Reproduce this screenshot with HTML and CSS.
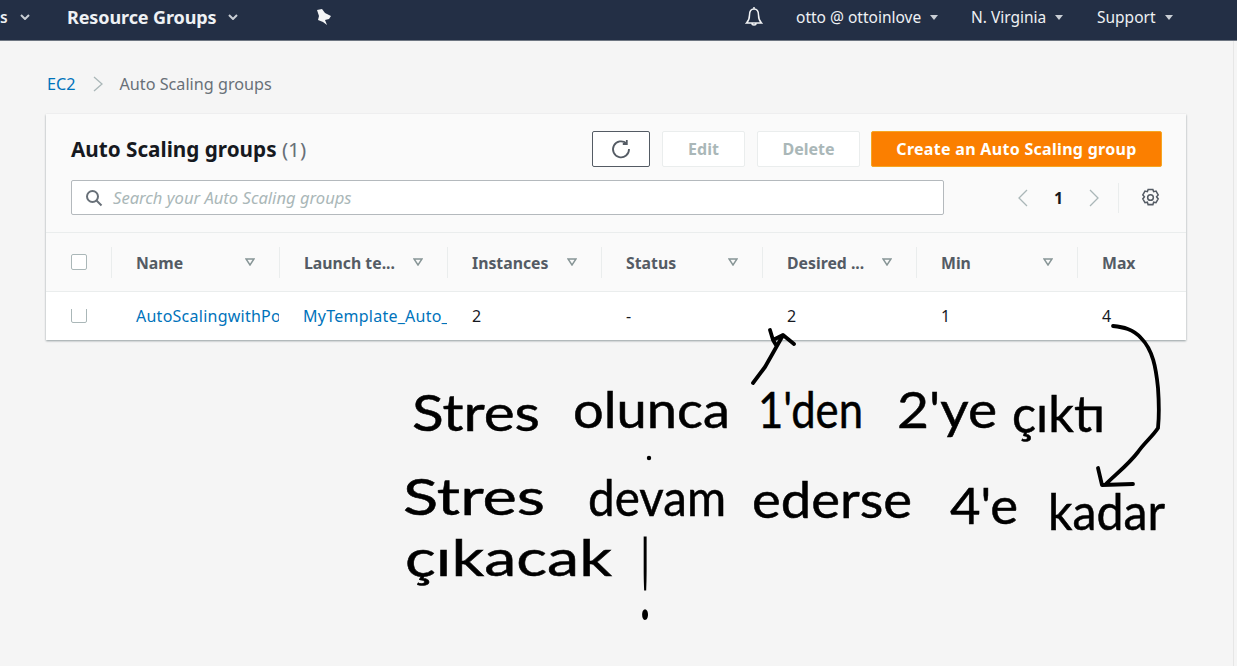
FILE: index.html
```html
<!DOCTYPE html>
<html lang="tr">
<head>
<meta charset="utf-8">
<title>Auto Scaling groups</title>
<link rel="stylesheet" href="styles.css">
</head>
<body>
<header class="topbar">
  <nav class="nav-left">
    <span class="nav-item nav-cut">s <svg class="chev" viewBox="0 0 10 6"><path d="M1 1l4 4 4-4"/></svg></span>
    <span class="nav-item nav-strong">Resource Groups <svg class="chev" viewBox="0 0 10 6"><path d="M1 1l4 4 4-4"/></svg></span>
    <svg class="pin" viewBox="0 0 16 20"><path d="M1 3l5-1 3 4 6 3-2 3-4 1 2 5-4-3-5-2 1-4z"/></svg>
  </nav>
  <nav class="nav-right">
    <svg class="bell" viewBox="0 0 18 22"><path d="M9 1v2M4.500 9c0-4 2-6 4.500-6s4.500 2 4.500 6c0 4 1 6 3 8H1.500c2-2 3-4 3-8zM7 17.500c0 2 4 2 4 0"/></svg>
    <span class="nav-item nav-user">otto @ ottoinlove <svg class="tri" viewBox="0 0 8 5"><path d="M0 0h8L4 5z"/></svg></span>
    <span class="nav-item nav-region">N. Virginia <svg class="tri" viewBox="0 0 8 5"><path d="M0 0h8L4 5z"/></svg></span>
    <span class="nav-item nav-support">Support <svg class="tri" viewBox="0 0 8 5"><path d="M0 0h8L4 5z"/></svg></span>
  </nav>
</header>

<main class="content">
  <div class="crumbs">
    <a class="link">EC2</a>
    <svg class="crumb-sep" viewBox="0 0 10 16"><path d="M1 1l8 7-8 7"/></svg>
    <span>Auto Scaling groups</span>
  </div>

  <section class="card">
    <div class="card-head">
      <div class="title-row">
        <h1>Auto Scaling groups <span class="count">(1)</span></h1>
        <div class="actions">
          <button class="btn btn-icon"><svg viewBox="0 0 20 20"><path d="M15.500 4.500A8 8 0 1 0 18 10M15.800 1v4h-4"/></svg></button>
          <button class="btn btn-off btn-edit">Edit</button>
          <button class="btn btn-off btn-del">Delete</button>
          <button class="btn btn-primary">Create an Auto Scaling group</button>
        </div>
      </div>
      <div class="search-row">
        <div class="search">
          <svg viewBox="0 0 18 18"><circle cx="7.500" cy="7.500" r="5.500"/><path d="M11.500 11.500l5 5"/></svg>
          <span>Search your Auto Scaling groups</span>
        </div>
        <div class="pager">
          <svg class="pg" viewBox="0 0 10 18"><path d="M9 1L1 9l8 8"/></svg>
          <b>1</b>
          <svg class="pg" viewBox="0 0 10 18"><path d="M1 1l8 8-8 8"/></svg>
          <i class="pager-sep"></i>
          <svg class="gear" viewBox="0 0 20 20"><path d="M7.500 1.500h5l.8 2.400 2.500-.6 2.300 4-1.700 2 1.700 2.200-2.300 4-2.500-.6-.8 2.600h-5l-.8-2.600-2.500.6-2.300-4 1.700-2.200-1.700-2 2.300-4 2.500.6z"/><circle cx="10" cy="10" r="3"/></svg>
        </div>
      </div>
    </div>

    <div class="grid grid-head">
      <div class="cell cell-check"><i class="check"></i></div>
      <div class="cell th"><span>Name</span><svg class="sort" viewBox="0 0 10 8"><path d="M1 1h8L5 7z"/></svg></div>
      <div class="cell th"><span>Launch te...</span><svg class="sort" viewBox="0 0 10 8"><path d="M1 1h8L5 7z"/></svg></div>
      <div class="cell th"><span>Instances</span><svg class="sort" viewBox="0 0 10 8"><path d="M1 1h8L5 7z"/></svg></div>
      <div class="cell th"><span>Status</span><svg class="sort" viewBox="0 0 10 8"><path d="M1 1h8L5 7z"/></svg></div>
      <div class="cell th"><span>Desired ...</span><svg class="sort" viewBox="0 0 10 8"><path d="M1 1h8L5 7z"/></svg></div>
      <div class="cell th"><span>Min</span><svg class="sort" viewBox="0 0 10 8"><path d="M1 1h8L5 7z"/></svg></div>
      <div class="cell th"><span>Max</span></div>
    </div>

    <div class="grid grid-row">
      <div class="cell cell-check"><i class="check"></i></div>
      <div class="cell td"><a class="link">AutoScalingwithPolicy</a></div>
      <div class="cell td td-tight"><a class="link">MyTemplate_Auto_Scaling</a></div>
      <div class="cell td">2</div>
      <div class="cell td">-</div>
      <div class="cell td">2</div>
      <div class="cell td">1</div>
      <div class="cell td">4</div>
    </div>
  </section>
</main>

<svg class="ink" viewBox="0 0 1237 666" aria-label="Notlar">
  <g class="ink-lines">
    <path d="M753 383l12-16 17-30M770 330l3 10 3 5M773 340l10-5 11 9"/>
    <path d="M1113 326c10 1 20 3 28 12 12 12 15 30 17 50 1 14 1 30 0 40-5 8-14 15-20 24-10 13-22 22-33 33M1098 468l4 17 31-1"/>
  </g>
  <circle class="ink-dot" cx="649" cy="458" r="2.200"/>
  <g class="ink-text">
    <text x="412" y="431" textLength="128" lengthAdjust="spacingAndGlyphs">Stres</text>
    <text x="573" y="428" textLength="157" lengthAdjust="spacingAndGlyphs">olunca</text>
    <text x="758" y="428" textLength="105" lengthAdjust="spacingAndGlyphs">1'den</text>
    <text x="897" y="428" textLength="100" lengthAdjust="spacingAndGlyphs">2'ye</text>
    <text x="1012" y="432" textLength="93" lengthAdjust="spacingAndGlyphs">çıktı</text>
    <text x="403" y="515" textLength="142" lengthAdjust="spacingAndGlyphs">Stres</text>
    <text x="588" y="516" textLength="138" lengthAdjust="spacingAndGlyphs">devam</text>
    <text x="752" y="518" textLength="160" lengthAdjust="spacingAndGlyphs">ederse</text>
    <text x="950" y="524" textLength="68" lengthAdjust="spacingAndGlyphs">4'e</text>
    <text x="1048" y="530" textLength="117" lengthAdjust="spacingAndGlyphs">kadar</text>
    <text x="405" y="576" textLength="207" lengthAdjust="spacingAndGlyphs">çıkacak</text>
    <text class="ink-bang" transform="translate(645 619) scale(.55 1)">!</text>
  </g>
</svg>
</body>
</html>
```
FILE: styles.css
```css
* { box-sizing: border-box; }
html, body { margin: 0; height: 100%; }
body {
  position: relative;
  width: 1237px;
  height: 666px;
  overflow: hidden;
  background: #f5f5f5;
  font-family: "Noto Sans", "Open Sans", sans-serif;
  color: #16191f;
}

/* top bar */
.topbar {
  height: 41px;
  background: #232f45;
  border-bottom: 1px solid #6e7682;
  display: flex;
  justify-content: space-between;
  align-items: center;
  color: #eef1f4;
  font-size: 15.500px;
  padding-bottom: 6px;
}
.nav-left, .nav-right { display: flex; align-items: center; }
.nav-item { display: flex; align-items: center; white-space: nowrap; }
.nav-cut { font-weight: 600; gap: 12px; width: 67px; }
.nav-strong { font-weight: 700; font-size: 18px; gap: 11px; width: 249px; letter-spacing: -.1px; }
.chev { width: 10px; height: 6px; fill: none; stroke: #c9ced5; stroke-width: 2; }
.tri { width: 10px; height: 5px; fill: #c9ced5; }
.pin { width: 16px; height: 20px; fill: #f4f5f6; }
.bell { width: 18px; height: 22px; fill: none; stroke: #f0f2f4; stroke-width: 1.500; margin-right: 33px; }
.nav-user { gap: 8px; width: 175px; }
.nav-region { gap: 8px; width: 126px; }
.nav-support { gap: 8px; width: 140px; }

/* content */
.content { width: 1234px; height: 625px; padding-left: 46px; border-right: 1px solid #e6e6e6; }
.crumbs {
  height: 73px;
  display: flex;
  align-items: center;
  font-size: 16.200px;
  color: #687078;
  padding: 12px 0 0 1px;
}
.crumb-sep { width: 10px; height: 16px; margin: 0 17px; fill: none; stroke: #aab7b8; stroke-width: 1.300; }
.link { color: #0073bb; }

.card {
  width: 1140px;
  background: #fff;
  box-shadow: 0 1px 2px rgba(0, 28, 36, .4);
}
.card-head {
  background: #fafafa;
  height: 119px;
  padding: 17px 24px 0 25px;
  border-bottom: 1px solid #eaeded;
}
.title-row { display: flex; justify-content: space-between; align-items: center; height: 36px; }
h1 { margin: 0; font-size: 20.700px; font-weight: 700; }
.count { font-weight: 400; color: #687078; }
.actions { display: flex; gap: 12px; }
.btn {
  height: 36px;
  border-radius: 2px;
  font: 700 16px/1 "Noto Sans", "Open Sans", sans-serif;
  padding: 0;
  background: #fff;
}
.btn-icon { width: 58px; border: 1px solid #545b64; display: flex; align-items: center; justify-content: center; }
.btn-icon svg { width: 20px; height: 20px; fill: none; stroke: #545b64; stroke-width: 1.800; }
.btn-off { border: 1px solid #eaeded; color: #aab7b8; }
.btn-edit { width: 83px; }
.btn-del { width: 103px; }
.btn-primary { width: 291px; border: 1px solid #f5a623; background: #fb7f00; color: #fff; margin-left: -1px; letter-spacing: .3px; }

.search-row { display: flex; align-items: center; justify-content: space-between; margin-top: 13px; }
.search {
  width: 873px;
  height: 35px;
  background: #fff;
  border: 1px solid #b4b9bd;
  border-radius: 2px;
  display: flex;
  align-items: center;
  gap: 10px;
  padding-left: 13px;
  font-size: 16.600px;
  font-style: italic;
  color: #aab7b8;
}
.search svg { width: 18px; height: 18px; fill: none; stroke: #687078; stroke-width: 2; }
.pager { display: flex; align-items: center; height: 35px; width: 145px; }
.pg { width: 12px; height: 18px; fill: none; stroke: #aab7b8; stroke-width: 1.300; }
.pager b { width: 59px; text-align: center; font-size: 16px; }
.pager-sep { width: 1px; height: 30px; background: #eaeded; margin: 0 22px 0 18px; }
.gear { width: 19px; height: 19px; fill: none; stroke: #545b64; stroke-width: 1.600; }

/* table */
.grid {
  display: grid;
  grid-template-columns: 65px 168px 168px 154px 161px 154px 161px 109px;
  align-items: center;
}
.grid-head { height: 59px; background: #fafafa; border-bottom: 1px solid #eaeded; font-size: 15.800px; font-weight: 700; color: #545b64; }
.grid-row { height: 48px; font-size: 16px; letter-spacing: .25px; }
.cell { padding-left: 25px; overflow: hidden; white-space: nowrap; }
.cell-check { display: flex; }
.check { width: 16px; height: 16px; background: #fff; border: 1px solid #aab7b8; border-radius: 2px; }
.grid-row .check { margin-top: -2px; }
.th {
  height: 31px;
  padding: 2px 24px 0;
  border-left: 1px solid #eaeded;
  display: flex;
  align-items: center;
  justify-content: space-between;
}
.sort { width: 10px; height: 8px; fill: none; stroke: #879596; stroke-width: 1.500; margin-top: -2px; }
.td { color: #16191f; }
.td-tight { padding-left: 24px; }

/* handwritten notes laid over the page */
.ink { position: absolute; left: 0; top: 0; width: 1237px; height: 666px; pointer-events: none; }
.ink-lines path { fill: none; stroke: #000; stroke-width: 3.800; stroke-linecap: round; stroke-linejoin: round; }
.ink-dot { fill: #000; }
.ink-text text { font-family: "Lato", sans-serif; font-size: 50px; font-weight: 400; fill: #000; stroke: #000; stroke-width: .5px; }
.ink-text .ink-bang { font-size: 116px; font-weight: 300; text-anchor: middle; stroke: none; }
```
